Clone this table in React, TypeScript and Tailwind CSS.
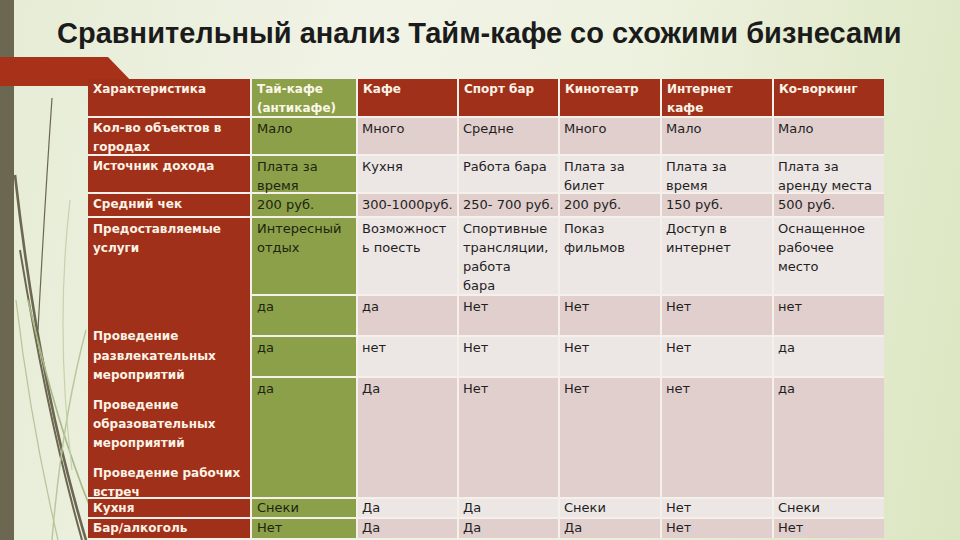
import React from "react";

const RED = "bg-[#a1301a]";

const heads = ["Кафе", "Спорт бар", "Кинотеатр", "Интернет кафе", "Ко-воркинг"];

const body: { green: string; cells: string[]; tone: "p" | "l" }[] = [
  { green: "Мало", cells: ["Много", "Средне", "Много", "Мало", "Мало"], tone: "p" },
  { green: "Плата за время", cells: ["Кухня", "Работа бара", "Плата за билет", "Плата за время", "Плата за аренду места"], tone: "l" },
  { green: "200 руб.", cells: ["300-1000руб.", "250- 700 руб.", "200 руб.", "150 руб.", "500 руб."], tone: "p" },
  { green: "Интересный\nотдых", cells: ["Возможност\nь поесть", "Спортивные\nтрансляции,\nработа\nбара", "Показ\nфильмов", "Доступ в\nинтернет", "Оснащенное\nрабочее\nместо"], tone: "l" },
  { green: "да", cells: ["да", "Нет", "Нет", "Нет", "нет"], tone: "p" },
  { green: "да", cells: ["нет", "Нет", "Нет", "Нет", "да"], tone: "l" },
  { green: "да", cells: ["Да", "Нет", "Нет", "нет", "да"], tone: "p" },
  { green: "Снеки", cells: ["Да", "Да", "Снеки", "Нет", "Снеки"], tone: "l" },
  { green: "Нет", cells: ["Да", "Да", "Да", "Нет", "Нет"], tone: "p" },
];

const leftLabels: Record<number, string> = {
  0: "Кол-во объектов в городах",
  1: "Источник дохода",
  2: "Средний чек",
  7: "Кухня",
  8: "Бар/алкоголь",
};

export default function App() {
  const font = { fontFamily: '"DejaVu Sans", sans-serif' };
  return (
    <div
      className="relative w-[960px] h-[540px] overflow-hidden bg-[linear-gradient(100deg,#e6ecd5_0%,#f1f3e6_35%,#eef2e0_60%,#dbe6c1_100%)]"
      style={font}
    >
      {/* left strip */}
      <div className="absolute left-0 top-0 w-[14px] h-full bg-[#6c6750]" />
      {/* grass */}
      <svg className="absolute left-0 top-0" width="110" height="540" viewBox="0 0 110 540">
        <path d="M52 98 Q45 200 38 330" stroke="#6c6750" strokeWidth="1.2" fill="none" />
        <path d="M15 175 Q38 380 86 540" stroke="#6c6750" strokeWidth="2.6" fill="none" />
        <path d="M20 250 Q48 420 82 540" stroke="#6c6750" strokeWidth="2" fill="none" />
        <path d="M28 300 Q58 430 92 512" stroke="#a9b987" strokeWidth="1.6" fill="none" />
        <path d="M86 330 Q62 420 52 540" stroke="#b8c69a" strokeWidth="1.4" fill="none" />
        <path d="M16 300 Q30 420 58 540" stroke="#b8c69a" strokeWidth="1.3" fill="none" />
        <path d="M70 200 Q55 330 72 470" stroke="#c6d2ab" strokeWidth="1.2" fill="none" />
      </svg>
      {/* red banner */}
      <svg className="absolute left-0 top-[57px]" width="140" height="30" viewBox="0 0 140 30">
        <polygon points="0,0 108,0 136,29 0,29" fill="#a83219" />
      </svg>

      <div className="relative flex flex-col">
        <h1
          className="pl-[57px] pt-[16px] h-[79px] text-[29px] leading-[34px] font-bold text-[#1b1b1b]"
          style={{ fontFamily: '"Liberation Sans", sans-serif' }}
        >
          Сравнительный анализ Тайм-кафе со схожими бизнесами
        </h1>
        <div className="ml-[88px] w-[796px] grid grid-cols-[162px_104px_99px_99px_100px_110px_110px] grid-rows-[37px_36px_36px_22px_76px_39px_39px_119px_18px_19px] gap-[2px] bg-[#f5f1ea] text-[13px] leading-[19px] whitespace-pre-line">
          {/* header */}
          <div className={`${RED} px-[5px] pt-[1px] text-[12px] font-bold text-[#fbf3e6]`}>Характеристика</div>
          <div className="bg-[#8ba049] px-[5px] pt-[1px] text-[12px] font-bold text-[#fbf6e8]">Тай-кафе (антикафе)</div>
          {heads.map((c) => (
            <div key={c} className={`${RED} px-[5px] pt-[1px] text-[12px] font-bold text-[#fbf3e6]`}>
              {c}
            </div>
          ))}
          {body.map((r, i) => {
            const tone = r.tone === "p" ? "bg-[#e1cfcd]" : "bg-[#ece6e4]";
            const lead = i >= 7 ? "leading-[18px] pt-0" : "pt-[1px]";
            return (
              <React.Fragment key={i}>
                {leftLabels[i] !== undefined ? (
                  <div className={`${RED} px-[5px] text-[12px] font-bold text-[#fbf3e6] ${lead}`}>{leftLabels[i]}</div>
                ) : i === 3 ? (
                  <div className={`${RED} row-span-4 px-[5px] pt-[2px] text-[12px] font-bold text-[#fbf3e6] flex flex-col`}>
                    <div>Предоставляемые услуги</div>
                    <div className="mt-[69px] leading-[19.5px]">Проведение развлекательных мероприятий</div>
                    <div className="mt-[10px]">Проведение образовательных мероприятий</div>
                    <div className="mt-[11px]">Проведение рабочих встреч</div>
                  </div>
                ) : null}
                <div className={`bg-[#8ba049] px-[5px] text-[#1e2410] ${lead}`}>{r.green}</div>
                {r.cells.map((c, j) => (
                  <div key={j} className={`${tone} px-[4px] text-[#1f1f1f] ${lead}`}>
                    {c}
                  </div>
                ))}
              </React.Fragment>
            );
          })}
        </div>
      </div>
    </div>
  );
}
